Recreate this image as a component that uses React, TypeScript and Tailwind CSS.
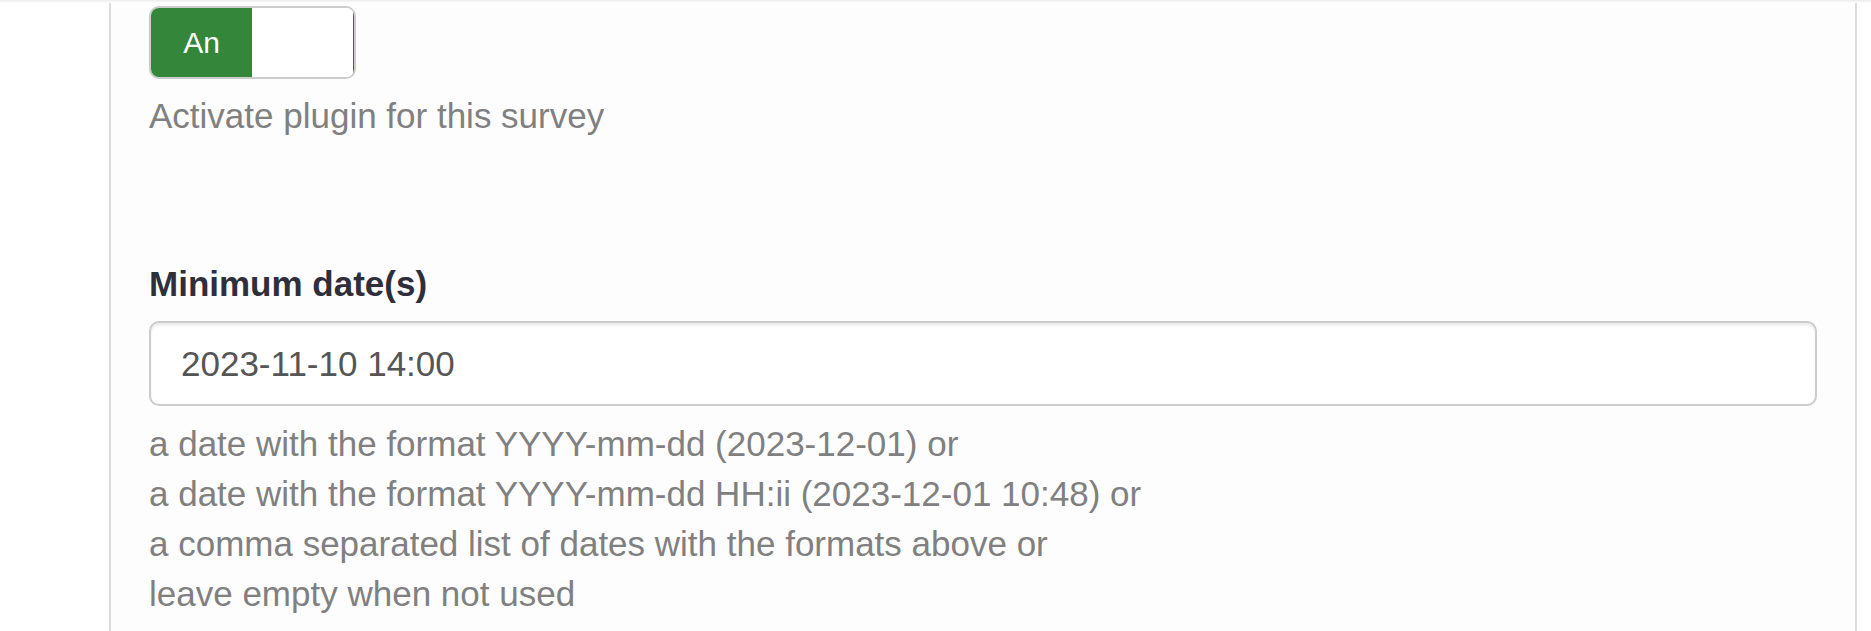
export default function App() {
  const hints = [
    "a date with the format YYYY-mm-dd (2023-12-01) or",
    "a date with the format YYYY-mm-dd HH:ii (2023-12-01 10:48) or",
    "a comma separated list of dates with the formats above or",
    "leave empty when not used",
  ];

  return (
    <div className="relative h-[631px] w-full overflow-hidden bg-white font-['Liberation_Sans',Arial,sans-serif]">
      {/* faint shadow from the header above */}
      <div className="absolute inset-x-0 top-0 h-[3px] bg-gradient-to-b from-[#ececec] to-white" />

      <div className="ml-[109px] mr-[14px] h-full border-x-2 border-[#dcdcdc] bg-[#fdfdfd] px-[38px] pt-[6px]">
        {/* plugin switch */}
        <div className="flex h-[73px] w-[207px] overflow-hidden rounded-[10px] border-[2.5px] border-[#cccccc] bg-white">
          <span className="flex w-[101px] items-center justify-center bg-[#33863a] text-[30px] leading-none text-white">
            An
          </span>
          <span className="flex-1 bg-white" />
          <span className="w-px bg-[#b3362f]" />
        </div>
        <p className="mt-[11.5px] text-[35px] leading-[50px] text-[#808080]">
          Activate plugin for this survey
        </p>

        {/* minimum date field */}
        <div className="mt-[118px]">
          <label className="block text-[35px] font-bold leading-[50px] text-[#2f2f3b]">
            Minimum date(s)
          </label>
          <input
            type="text"
            defaultValue="2023-11-10 14:00"
            className="mt-[12.5px] block h-[85px] w-full rounded-[10px] border-[2.5px] border-[#cccccc] bg-white px-[30px] text-[35px] text-[#555555] shadow-[inset_0_2.5px_2.5px_rgba(0,0,0,0.075)] outline-none"
          />
          <div className="mt-[12.5px] text-[35px] leading-[50px] text-[#808080]">
            {hints.map((line) => (
              <p key={line}>{line}</p>
            ))}
          </div>
        </div>
      </div>
    </div>
  );
}
